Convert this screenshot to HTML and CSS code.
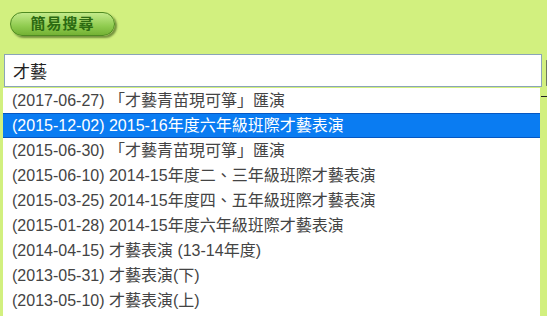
FILE: index.html
```html
<!DOCTYPE html>
<html lang="zh-Hant">
<head>
    <meta charset="UTF-8">
    <title>簡易搜尋</title>
    <link rel="stylesheet" href="styles.css">
</head>
<body>
    <div class="search-page">
        <div class="tab-row">
            <span class="pill-button">簡易搜尋</span>
        </div>
        <div class="search-row">
            <div class="search-box">
                <input type="text" class="search-input" value="才藝">
                <ul class="suggest-list">
                    <li>(2017-06-27) 「才藝青苗現可箏」匯演</li>
                    <li class="active">(2015-12-02) 2015-16年度六年級班際才藝表演</li>
                    <li>(2015-06-30) 「才藝青苗現可箏」匯演</li>
                    <li>(2015-06-10) 2014-15年度二、三年級班際才藝表演</li>
                    <li>(2015-03-25) 2014-15年度四、五年級班際才藝表演</li>
                    <li>(2015-01-28) 2014-15年度六年級班際才藝表演</li>
                    <li>(2014-04-15) 才藝表演 (13-14年度)</li>
                    <li>(2013-05-31) 才藝表演(下)</li>
                    <li>(2013-05-10) 才藝表演(上)</li>
                </ul>
            </div>
            <span class="go-button"></span>
        </div>
        <div class="rule"></div>
    </div>
</body>
</html>
```

FILE: styles.css
```css
body {
    margin: 0;
    background-color: #d2f07f;
    font-family: "Liberation Sans", Arial, "Noto Sans CJK TC", sans-serif;
    overflow: hidden;
}

.search-page {
    width: 547px;
    height: 316px;
}

.tab-row {
    padding: 12px 0 0 10px;
    height: 42px;
}

.pill-button {
    display: inline-block;
    width: 103px;
    height: 22px;
    line-height: 22px;
    text-align: center;
    border: 1px solid #4f8a22;
    border-radius: 12px;
    background: linear-gradient(#c3ea8a, #8fcb4f 60%, #74b234);
    box-shadow: 2px 2px 2px rgba(40, 70, 10, 0.55);
    color: #2c6a12;
    font-size: 15px;
    font-weight: bold;
    letter-spacing: 1px;
}

.search-row {
    display: flex;
    align-items: flex-start;
    padding-left: 4px;
}

.search-box {
    position: relative;
}

.search-input {
    display: block;
    box-sizing: border-box;
    width: 538px;
    height: 33px;
    margin: 0;
    padding: 0 8px;
    border: 1px solid #8aa4b8;
    background: #fff;
    font-family: "Liberation Sans", Arial, "Noto Sans CJK TC", sans-serif;
    font-size: 17px;
    color: #222;
    outline: none;
}

.suggest-list {
    position: absolute;
    top: 34px;
    left: -1px;
    width: 537px;
    height: 240px;
    margin: 0;
    padding: 0;
    list-style: none;
    background: #fff;
    z-index: 2;
}

.suggest-list li {
    box-sizing: border-box;
    height: 25px;
    line-height: 25px;
    padding-left: 9px;
    font-size: 16px;
    color: #444;
    white-space: nowrap;
}

.suggest-list li.active {
    background: #0a7cf2;
    border-top: 1px solid #0557c2;
    border-bottom: 1px solid #0557c2;
    line-height: 23px;
    color: #fff;
}

.go-button {
    display: block;
    width: 6px;
    height: 24px;
    margin: 6px 0 0 4px;
    border: 1px solid #6d7a5c;
    border-right: none;
    border-radius: 3px 0 0 3px;
    background: #e6e6e0;
}

.rule {
    margin: 9px 0 0 541px;
    width: 6px;
    border-top: 1px solid #222;
}
```
